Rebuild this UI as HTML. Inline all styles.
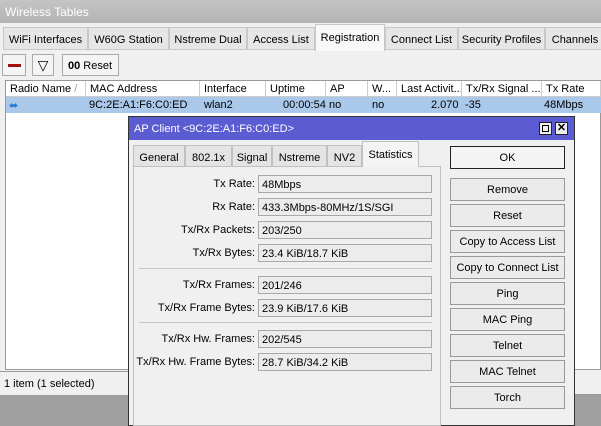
<!DOCTYPE html>
<html><head><meta charset="utf-8"><style>
*{box-sizing:border-box;margin:0;padding:0;white-space:nowrap}
body{width:601px;height:416px;overflow:hidden;background:#a0a0a0;font-family:"Liberation Sans",sans-serif;font-size:11px;color:#000;position:relative}
.a{position:absolute;overflow:hidden}
.title{left:0;top:0;width:601px;height:23px;background:linear-gradient(#c4c4c4,#b4b4b4);color:#fff;font-size:12px;padding:5px 0 0 5px}
.main{left:0;top:23px;width:601px;height:372px;background:#f0f0f0}
.tab{top:27px;height:23px;border:1px solid #c8c8c8;background:#e6e6e6;font-size:11px;padding:6px 0 0 0;text-align:center}
.tab.on{background:#f8f8f8;top:24px;height:27px;padding-top:7px;border-bottom:none}
.btn{border:1px solid #aaa;background:#f4f4f4}
.list{left:5px;top:80px;width:596px;height:290px;background:#fff;border:1px solid #999}
.hd{top:81px;height:16px;border-right:1px solid #ccc;padding:2px 0 0 4px;font-size:11px;background:#fff;border-bottom:1px solid #ccc}
.row{left:6px;top:97px;width:595px;height:16px;background:#a9c8ea}
.cell{top:99px;font-size:11px}
.status{left:0;top:371px;width:130px;height:24px;background:#f0f0f0;border-top:1px solid #999;padding:6px 0 0 4px;font-size:11px}
.dlg{left:128px;top:116px;width:447px;height:310px;background:#f0f0f0;border:1px solid #333}
.dtitle{left:129px;top:117px;width:445px;height:23px;background:#5b5bd2;color:#fff;font-size:11px;padding:6px 0 0 5px}
.dtab{top:145px;height:22px;border:1px solid #c0c0c0;background:#e4e4e4;font-size:11px;text-align:center;padding-top:6px}
.dtab.on{top:141px;height:26px;background:#f4f4f4;border-bottom:none;padding-top:7px}
.panel{left:133px;top:166px;width:308px;height:260px;border:1px solid #c0c0c0;background:#f0f0f0}
.lbl{width:123px;left:132px;text-align:right;font-size:11px}
.fld{left:258px;width:174px;height:18px;border:1px solid #a8a8a8;background:#ececec;font-size:11px;padding:3px 0 0 3px}
.sep{left:139px;width:293px;height:1px;background:#c8c8c8}
.b{left:450px;width:115px;height:23px;border:1px solid #999;background:#ebebeb;font-size:11px;text-align:center;padding-top:5px}
</style></head><body>
<div class="a title">Wireless Tables</div>
<div class="a main"></div>
<div class="a tab" style="left:3px;width:85px">WiFi Interfaces</div>
<div class="a tab" style="left:88px;width:81px">W60G Station</div>
<div class="a tab" style="left:169px;width:78px">Nstreme Dual</div>
<div class="a tab" style="left:247px;width:68px">Access List</div>
<div class="a tab on" style="left:315px;width:70px">Registration</div>
<div class="a tab" style="left:385px;width:73px">Connect List</div>
<div class="a tab" style="left:458px;width:87px">Security Profiles</div>
<div class="a tab" style="left:545px;width:60px">Channels</div>
<div class="a btn" style="left:2px;top:54px;width:24px;height:22px"><div class="a" style="left:5px;top:9px;width:13px;height:3px;background:#a01010"></div></div>
<div class="a btn" style="left:32px;top:54px;width:22px;height:22px;text-align:center;font-size:14px;padding-top:2px">&#x25BD;</div>
<div class="a btn" style="left:62px;top:54px;width:57px;height:22px;font-size:11px;padding:5px 0 0 5px"><b>00</b> Reset</div>
<div class="a list"></div>
<div class="a hd" style="left:6px;width:80px">Radio Name <span style="color:#999">/</span></div>
<div class="a hd" style="left:86px;width:114px">MAC Address</div>
<div class="a hd" style="left:200px;width:66px">Interface</div>
<div class="a hd" style="left:266px;width:60px">Uptime</div>
<div class="a hd" style="left:326px;width:42px">AP</div>
<div class="a hd" style="left:368px;width:29px">W...</div>
<div class="a hd" style="left:397px;width:65px">Last Activit...</div>
<div class="a hd" style="left:462px;width:80px">Tx/Rx Signal ...</div>
<div class="a hd" style="left:542px;width:59px">Tx Rate</div>
<div class="a row"></div>
<div class="a cell" style="left:9px;color:#2a7ad6">&#x2B0C;</div>
<div class="a cell" style="left:89px">9C:2E:A1:F6:C0:ED</div>
<div class="a cell" style="left:204px">wlan2</div>
<div class="a cell" style="left:283px">00:00:54</div>
<div class="a cell" style="left:329px">no</div>
<div class="a cell" style="left:372px">no</div>
<div class="a cell" style="left:431px">2.070</div>
<div class="a cell" style="left:465px">-35</div>
<div class="a cell" style="left:544px">48Mbps</div>
<div class="a status">1 item (1 selected)</div>
<div class="a" style="left:575px;top:392px;width:26px;height:3px;background:#f0f0f0;border-bottom:1px solid #999"></div>
<div class="a dlg"></div>
<div class="a dtitle">AP Client &lt;9C:2E:A1:F6:C0:ED&gt;</div>
<div class="a" style="left:539px;top:122px;width:13px;height:13px;background:#f0f0f0;border:1px solid #222"><div class="a" style="left:2px;top:2px;width:7px;height:7px;border:1px solid #000"></div></div>
<div class="a" style="left:555px;top:122px;width:13px;height:13px;background:#f0f0f0;border:1px solid #222;font-size:11px;font-weight:bold;text-align:center;line-height:11px">&#x2715;</div>
<div class="a panel"></div>
<div class="a dtab" style="left:133px;width:52px">General</div>
<div class="a dtab" style="left:185px;width:47px">802.1x</div>
<div class="a dtab" style="left:232px;width:40px">Signal</div>
<div class="a dtab" style="left:272px;width:55px">Nstreme</div>
<div class="a dtab" style="left:327px;width:35px">NV2</div>
<div class="a dtab on" style="left:362px;width:57px">Statistics</div>
<div class="a lbl" style="top:178px">Tx Rate:</div><div class="a fld" style="top:175px">48Mbps</div>
<div class="a lbl" style="top:201px">Rx Rate:</div><div class="a fld" style="top:198px">433.3Mbps-80MHz/1S/SGI</div>
<div class="a lbl" style="top:224px">Tx/Rx Packets:</div><div class="a fld" style="top:221px">203/250</div>
<div class="a lbl" style="top:247px">Tx/Rx Bytes:</div><div class="a fld" style="top:244px">23.4 KiB/18.7 KiB</div>
<div class="a sep" style="top:268px"></div>
<div class="a lbl" style="top:279px">Tx/Rx Frames:</div><div class="a fld" style="top:276px">201/246</div>
<div class="a lbl" style="top:302px">Tx/Rx Frame Bytes:</div><div class="a fld" style="top:299px">23.9 KiB/17.6 KiB</div>
<div class="a sep" style="top:322px"></div>
<div class="a lbl" style="top:333px">Tx/Rx Hw. Frames:</div><div class="a fld" style="top:330px">202/545</div>
<div class="a lbl" style="top:356px">Tx/Rx Hw. Frame Bytes:</div><div class="a fld" style="top:353px">28.7 KiB/34.2 KiB</div>
<div class="a b" style="top:146px;border:1px solid #222;background:#f4f4f4">OK</div>
<div class="a b" style="top:178px">Remove</div>
<div class="a b" style="top:204px">Reset</div>
<div class="a b" style="top:230px">Copy to Access List</div>
<div class="a b" style="top:256px">Copy to Connect List</div>
<div class="a b" style="top:282px">Ping</div>
<div class="a b" style="top:308px">MAC Ping</div>
<div class="a b" style="top:334px">Telnet</div>
<div class="a b" style="top:360px">MAC Telnet</div>
<div class="a b" style="top:386px">Torch</div>
</body></html>
